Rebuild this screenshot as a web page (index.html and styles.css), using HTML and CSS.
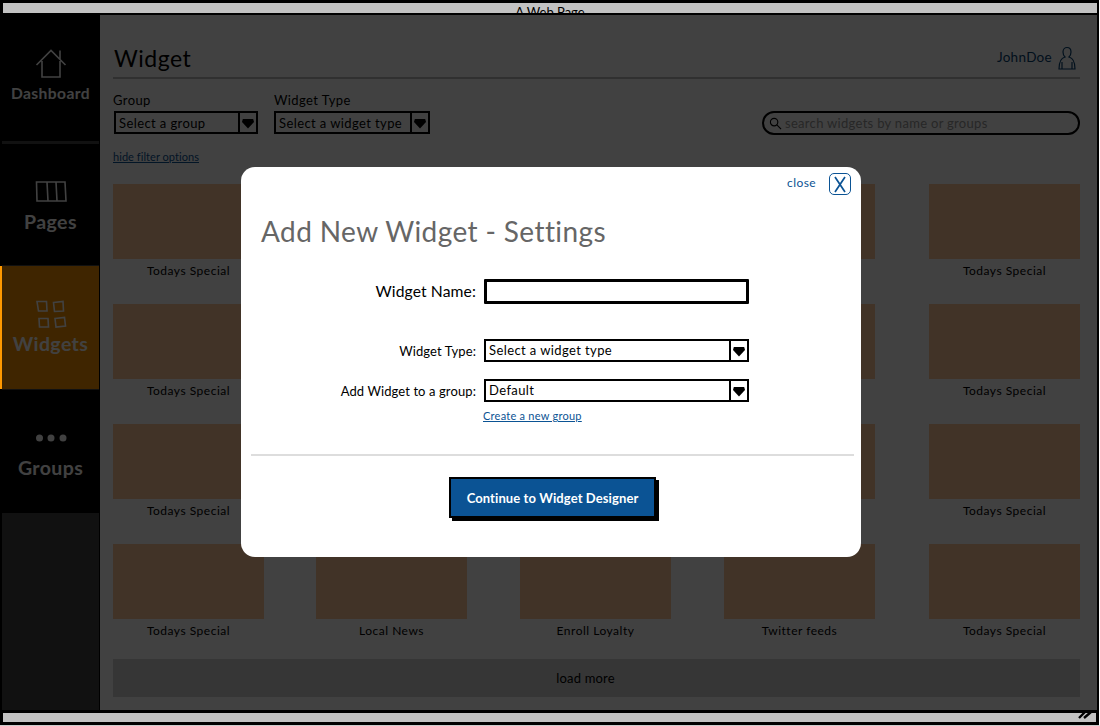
FILE: index.html
```html
<!DOCTYPE html>
<html>
  <head>
    <meta charset="UTF-8" />
    <title>A Web Page</title>
    <link rel="stylesheet" href="styles.css">
  </head>
  <body>
    <div class="window">
      <div class="titlebar"><span>A Web Page</span></div>
      <div class="main">
        <nav class="sidebar">
          <a class="nav-item nav-dashboard">
            <svg class="nav-icon" viewBox="0 0 30 30"><path d="M0.5 16 L15 1.5 L29.5 16 M24 1.5 V10 M6 12 V28 H24 V12" /></svg>
            <span>Dashboard</span>
          </a>
          <a class="nav-item nav-pages">
            <svg class="nav-icon" viewBox="0 0 30 30"><path d="M0.5 4 H29 L30 23 H1 Z M11 4 L12 23 M20 4 L21 23" /></svg>
            <span>Pages</span>
          </a>
          <a class="nav-item active">
            <svg class="nav-icon" viewBox="0 0 30 30"><path d="M1 1.5 H10.5 L11 11 H2.5 Z M17.5 2.5 L27 1.5 L27.5 11 L18.5 11.5 Z M3 18.5 H12 L12.5 27 H3.5 Z M19 18.5 L28.5 17.5 L29.5 26 L20 27 Z" /></svg>
            <span>Widgets</span>
          </a>
          <a class="nav-item">
            <svg class="nav-icon" viewBox="0 0 30 30"><circle class="dot" cx="3.5" cy="14" r="3.5" /><circle class="dot" cx="15" cy="14" r="3.5" /><circle class="dot" cx="27" cy="14" r="3.5" /></svg>
            <span>Groups</span>
          </a>
        </nav>

        <div class="content">
          <header class="page-head">
            <h1>Widget</h1>
            <div class="user">
              <span>JohnDoe</span>
              <svg class="user-icon" viewBox="0 0 18 24"><path d="M5 6 C5 0 13 0 13 6 C13 9 12 10 11 11 C15 12 17 15 17 23 H1 C1 15 3 12 7 11 C6 10 5 9 5 6 Z M4 23 V16 M14 23 V16" /></svg>
            </div>
          </header>

          <div class="filters">
            <div class="filter">
              <label>Group</label>
              <div class="select select-group">
                <span>Select a group</span>
                <i class="arrow"></i>
              </div>
            </div>
            <div class="filter">
              <label>Widget Type</label>
              <div class="select select-type">
                <span>Select a widget type</span>
                <i class="arrow"></i>
              </div>
            </div>
            <div class="search">
              <svg class="search-icon" viewBox="0 0 14 14"><circle cx="5.5" cy="5.5" r="4" /><path d="M8.5 8.5 L13 13" /></svg>
              <span>search widgets by name or groups</span>
            </div>
          </div>

          <a class="hide-link">hide filter options</a>

          <div class="widget-grid">
            <div class="card"><div class="thumb"></div><p>Todays Special</p></div>
            <div class="card"><div class="thumb"></div><p>Todays Special</p></div>
            <div class="card"><div class="thumb"></div><p>Todays Special</p></div>
            <div class="card"><div class="thumb"></div><p>Todays Special</p></div>
            <div class="card"><div class="thumb"></div><p>Todays Special</p></div>
            <div class="card"><div class="thumb"></div><p>Todays Special</p></div>
            <div class="card"><div class="thumb"></div><p>Todays Special</p></div>
            <div class="card"><div class="thumb"></div><p>Todays Special</p></div>
            <div class="card"><div class="thumb"></div><p>Todays Special</p></div>
            <div class="card"><div class="thumb"></div><p>Todays Special</p></div>
            <div class="card"><div class="thumb"></div><p>Todays Special</p></div>
            <div class="card"><div class="thumb"></div><p>Todays Special</p></div>
            <div class="card"><div class="thumb"></div><p>Todays Special</p></div>
            <div class="card"><div class="thumb"></div><p>Todays Special</p></div>
            <div class="card"><div class="thumb"></div><p>Todays Special</p></div>
            <div class="card"><div class="thumb"></div><p>Todays Special</p></div>
            <div class="card"><div class="thumb"></div><p>Local News</p></div>
            <div class="card"><div class="thumb"></div><p>Enroll Loyalty</p></div>
            <div class="card"><div class="thumb"></div><p>Twitter feeds</p></div>
            <div class="card"><div class="thumb"></div><p>Todays Special</p></div>
          </div>

          <div class="load-more">load more</div>
        </div>

        <!-- dimmed layer with the dialog -->
        <div class="overlay">
          <div class="modal">
            <div class="modal-close">
              <a>close</a>
              <button class="close-btn">
                <svg viewBox="0 0 14 17"><path d="M2 1 L12 16 M12 1 L2 16" /></svg>
              </button>
            </div>
            <h2>Add New Widget - Settings</h2>
            <div class="form">
              <label class="label-big">Widget Name:</label>
              <div class="text-input"></div>
              <label class="row-type">Widget Type:</label>
              <div class="select row-type">
                <span>Select a widget type</span>
                <i class="arrow"></i>
              </div>
              <label class="row-group">Add Widget to a group:</label>
              <div class="select row-group">
                <span>Default</span>
                <i class="arrow"></i>
              </div>
              <a class="create-link">Create a new group</a>
            </div>
            <hr />
            <div class="modal-actions">
              <button class="continue-btn">Continue to Widget Designer</button>
            </div>
          </div>
        </div>
      </div>
      <div class="statusbar">
        <svg class="grip" viewBox="0 0 14 8"><path d="M1 7 L7 1 M6 7 L13 1" /></svg>
      </div>
    </div>
  </body>
</html>
```

FILE: styles.css
```css
* { box-sizing: border-box; }
html, body { margin: 0; padding: 0; }
body {
    font-family: "Lato", "Noto Sans", sans-serif;
    background-color: #fff;
    color: #000;
}
a { text-decoration: none; }

.window {
    width: 1100px;
    height: 726px;
    display: flex;
    flex-direction: column;
    background-color: #000;
    border-right: 1px solid #fff;
    border-bottom: 1px solid #ccc;
    overflow: hidden;
}

/* Browser chrome */
.titlebar {
    height: 12px;
    margin: 3px 2px 0 3px;
    background-color: #c2c2c2;
    border-bottom: 2px solid #000;
    text-align: center;
    overflow: hidden;
    font-size: 13px;
    line-height: 18px;
}
.statusbar {
    height: 9px;
    margin: 3px 3px 3px 3px;
    background-color: #c2c2c2;
    display: flex;
    justify-content: flex-end;
    padding-right: 4px;
}
.grip {
    width: 14px;
    height: 8px;
    margin-top: -2px;
    fill: none;
    stroke: #000;
    stroke-width: 2.4;
}

.main {
    flex: 1;
    min-height: 0;
    display: flex;
    position: relative;
    margin: 0 2px;
    background-color: #fff;
}

/* Left nav */
.sidebar {
    width: 97px;
    flex-shrink: 0;
    background-color: #444;
    display: flex;
    flex-direction: column;
    color: #fff;
}
.nav-item {
    height: 123px;
    margin-bottom: 1px;
    padding-top: 34px;
    background-color: #000;
    display: flex;
    flex-direction: column;
    align-items: center;
    gap: 4px;
    font-size: 19.5px;
    font-weight: 700;
    letter-spacing: 0.4px;
    line-height: 20px;
    color: #fff;
}
.nav-dashboard {
    height: 126px;
    margin-bottom: 3px;
    font-size: 15.6px;
}
.nav-pages { height: 121px; }
.nav-item.active {
    background-color: #f79100;
    position: relative;
}
.nav-item.active::before {
    content: "";
    position: absolute;
    left: -2px;
    top: 0;
    width: 2px;
    height: 100%;
    background-color: #ff9900;
    z-index: 3;
}
.nav-icon {
    width: 30px;
    height: 30px;
    fill: none;
    stroke: #fff;
    stroke-width: 1.6;
    overflow: visible;
}
.nav-icon .dot { fill: #fff; stroke: none; }

/* Page content */
.content {
    flex: 1;
    min-width: 0;
    padding: 0 17px 0 13px;
    border-left: 1px solid #000;
}
.page-head {
    height: 64px;
    border-bottom: 2px solid #bbb;
    display: flex;
    justify-content: space-between;
    align-items: flex-end;
    padding: 0 0 4px 1px;
}
.page-head h1 {
    margin: 0;
    font-size: 23px;
    font-weight: 400;
    letter-spacing: 0.5px;
    line-height: 30px;
}
.user {
    display: flex;
    align-items: center;
    gap: 6px;
    font-size: 13.5px;
    letter-spacing: 0.3px;
    color: #074070;
    margin: 0 4px 3px 0;
}
.user span { margin-bottom: 3px; }
.user-icon {
    width: 18px;
    height: 24px;
    fill: none;
    stroke: #074070;
    stroke-width: 1.2;
}

.filters {
    display: flex;
    align-items: flex-end;
    gap: 16px;
    margin-top: 12px;
}
.filter label {
    display: block;
    font-size: 13px;
    letter-spacing: 0.4px;
    line-height: 18px;
    margin-bottom: 2px;
}
.select {
    height: 23px;
    border: 2px solid #000;
    background-color: #fff;
    display: flex;
    align-items: center;
    justify-content: space-between;
    font-size: 13px;
    letter-spacing: 0.4px;
    padding-left: 3px;
}
.select-group { width: 144px; margin-left: 1px; }
.select-type { width: 156px; }
.arrow {
    width: 18px;
    height: 100%;
    border-left: 2px solid #000;
    display: flex;
    align-items: center;
    justify-content: center;
    flex-shrink: 0;
}
.arrow::after {
    content: "";
    width: 12px;
    height: 10px;
    margin-top: 2px;
    background-color: #000;
    clip-path: polygon(8% 0, 92% 0, 100% 35%, 50% 100%, 0 35%);
}
.search {
    margin: 0 0 -1px auto;
    width: 318px;
    height: 24px;
    border: 2px solid #000;
    border-radius: 12px;
    display: flex;
    align-items: center;
    gap: 3px;
    padding-left: 5px;
    font-size: 13px;
    letter-spacing: 0.3px;
    color: #999;
}
.search-icon {
    width: 13px;
    height: 13px;
    fill: none;
    stroke: #000;
    stroke-width: 1.2;
}
.hide-link {
    display: block;
    margin-top: 16px;
    width: max-content;
    font-size: 11px;
    letter-spacing: 0.05px;
    line-height: 14px;
    color: #0b5394;
    text-decoration: underline;
}

.widget-grid {
    margin-top: 20px;
    display: grid;
    grid-template-columns: 203px 204px 204px 205px 151px;
    row-gap: 20px;
}
.card { width: 151px; }
.thumb {
    height: 75px;
    background-color: #ffc899;
}
.card p {
    margin: 4px 0 0 0;
    height: 21px;
    text-align: center;
    font-size: 12px;
    letter-spacing: 0.5px;
    line-height: 16px;
}
.load-more {
    margin-top: 15px;
    height: 38px;
    padding-right: 22px;
    background-color: #d4d4d4;
    text-align: center;
    font-size: 13px;
    letter-spacing: 0.2px;
    line-height: 38px;
}

/* Dialog */
.overlay {
    position: absolute;
    inset: 0;
    z-index: 2;
    padding: 0 0 1px 3px;
    background-color: rgba(0, 0, 0, 0.745);
    display: flex;
    align-items: center;
    justify-content: center;
}
.modal {
    width: 620px;
    height: 390px;
    background-color: #fff;
    border-radius: 14px;
    padding: 6px 7px 0 10px;
}
.modal-close {
    display: flex;
    justify-content: flex-end;
    align-items: center;
    gap: 13px;
    margin-right: 3px;
    font-size: 12px;
    letter-spacing: 0.4px;
    color: #0b5394;
}
.modal-close a { margin-bottom: 3px; }
.close-btn {
    width: 22px;
    height: 22px;
    padding: 0;
    border: 1px solid #0b5394;
    border-radius: 5px;
    background-color: #fff;
    display: flex;
    align-items: center;
    justify-content: center;
}
.close-btn svg {
    width: 14px;
    height: 17px;
    fill: none;
    stroke: #0b5394;
    stroke-width: 1.7;
}
.modal h2 {
    margin: 18px 0 0 10px;
    font-size: 28px;
    font-weight: 400;
    letter-spacing: 0.4px;
    line-height: 36px;
    color: #666;
}
.form {
    margin-top: 30px;
    display: grid;
    grid-template-columns: 225px 265px;
    column-gap: 8px;
    align-items: center;
    grid-template-rows: 25px 35px 23px 17px 23px 16px;
    font-size: 13px;
    letter-spacing: 0.1px;
}
.form label { text-align: right; }
.form .label-big {
    font-size: 15.7px;
    margin-bottom: 2px;
}
.form .row-type { grid-row: 3; }
.form .row-group { grid-row: 5; }
.form .select span { margin-bottom: 2px; }
.text-input {
    height: 25px;
    border: 3px solid #000;
    border-radius: 1px;
}
.create-link {
    grid-row: 6;
    grid-column: 2;
    font-size: 11px;
    letter-spacing: 0.25px;
    line-height: 14px;
    color: #0b5394;
    text-decoration: underline;
    width: max-content;
    margin: 12px 0 0 -1px;
}
.modal hr {
    margin: 36px 0 0 0;
    border: 0;
    border-top: 2px solid #ddd;
}
.modal-actions {
    display: flex;
    justify-content: center;
    margin-top: 21px;
}
.continue-btn {
    width: 207px;
    height: 41px;
    background-color: #0b5394;
    border: 2px solid #000;
    box-shadow: 3px 3px 0 #000;
    color: #fff;
    font-family: inherit;
    font-size: 13px;
    letter-spacing: 0.1px;
    font-weight: 700;
}
```
